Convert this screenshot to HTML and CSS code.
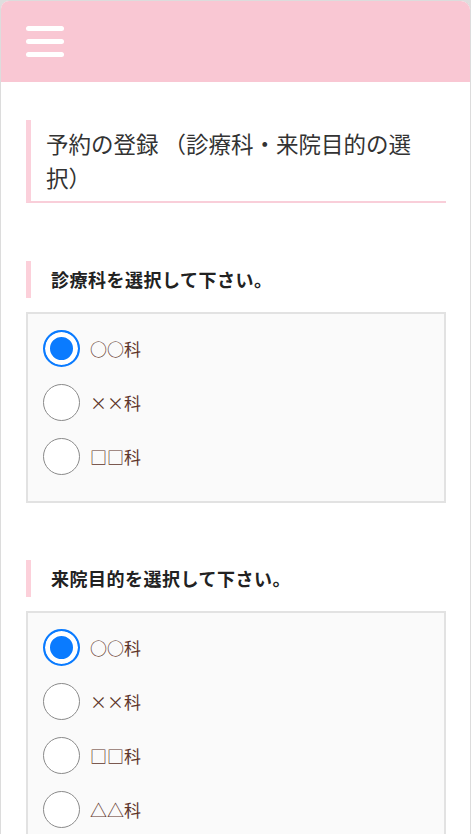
FILE: index.html
```html
<!DOCTYPE html>
<html lang="ja">
<head>
<meta charset="utf-8">
<title>予約の登録</title>
<link rel="stylesheet" href="styles.css">
</head>
<body>
<div class="frame">
  <header class="topbar">
    <button class="menu" aria-label="menu">
      <span class="bar"></span><span class="bar"></span><span class="bar"></span>
    </button>
  </header>
  <main class="content">
    <h1 class="page-title">予約の登録 （診療科・来院目的の選択）</h1>

    <section class="group">
      <h2 class="group-title">診療科を選択して下さい。</h2>
      <div class="choices">
        <label class="choice"><input type="radio" name="dept" checked><span>○○科</span></label>
        <label class="choice"><input type="radio" name="dept"><span>××科</span></label>
        <label class="choice"><input type="radio" name="dept"><span>□□科</span></label>
      </div>
    </section>

    <section class="group">
      <h2 class="group-title">来院目的を選択して下さい。</h2>
      <div class="choices">
        <label class="choice"><input type="radio" name="purpose" checked><span>○○科</span></label>
        <label class="choice"><input type="radio" name="purpose"><span>××科</span></label>
        <label class="choice"><input type="radio" name="purpose"><span>□□科</span></label>
        <label class="choice"><input type="radio" name="purpose"><span>△△科</span></label>
      </div>
    </section>
  </main>
</div>
</body>
</html>
```

FILE: styles.css
```css
html, body {
  margin: 0;
  padding: 0;
}
body {
  background: #dedede;
  font-family: "Noto Sans CJK JP", "Noto Sans", sans-serif;
  color: #333;
}
.frame {
  background: #fff;
  border: 1px solid #dcdcdc;
  border-bottom: none;
  border-radius: 9px 10px 0 0;
  min-height: 833px;
  overflow: hidden;
}
.topbar {
  height: 81px;
  background: #f9c7d3;
  display: flex;
  align-items: center;
  padding-left: 25px;
}
.menu {
  border: 0;
  background: none;
  padding: 0;
  width: 38px;
  display: flex;
  flex-direction: column;
  gap: 8px;
}
.bar {
  display: block;
  height: 5px;
  width: 38px;
  background: #fff;
  border-radius: 3px;
}
.content {
  padding: 38px 24px 0 25px;
}
.page-title {
  margin: 0;
  font-size: 22.5px;
  font-weight: normal;
  line-height: 34px;
  color: #333;
  border-left: 5px solid #fbd0db;
  border-bottom: 2px solid #f9ced9;
  padding: 6px 14px 7px 15px;
}
.group {
  margin-top: 58px;
}
.group + .group {
  margin-top: 57px;
}
.group-title {
  margin: 0;
  font-size: 18px;
  font-weight: bold;
  line-height: 37px;
  color: #222;
  border-left: 5px solid #fcd0da;
  padding-left: 20px;
  letter-spacing: 0.5px;
}
.choices {
  margin-top: 14px;
  border: 2px solid #e2e2e2;
  background: #fafafa;
  padding: 16px 14px 9px 15px;
}
.choice {
  display: flex;
  align-items: center;
  gap: 10px;
  height: 37px;
  margin-bottom: 17px;
  font-size: 17px;
  color: #5e3429;
}
.choice input {
  appearance: none;
  -webkit-appearance: none;
  margin: 0;
  width: 37px;
  height: 37px;
  border-radius: 50%;
  border: 1.5px solid #8a8a8a;
  background: #fff;
  flex: none;
}
.choice input:checked {
  border: 2px solid #0a7bff;
  background: #0a7bff;
  box-shadow: inset 0 0 0 5px #fff;
}
```
